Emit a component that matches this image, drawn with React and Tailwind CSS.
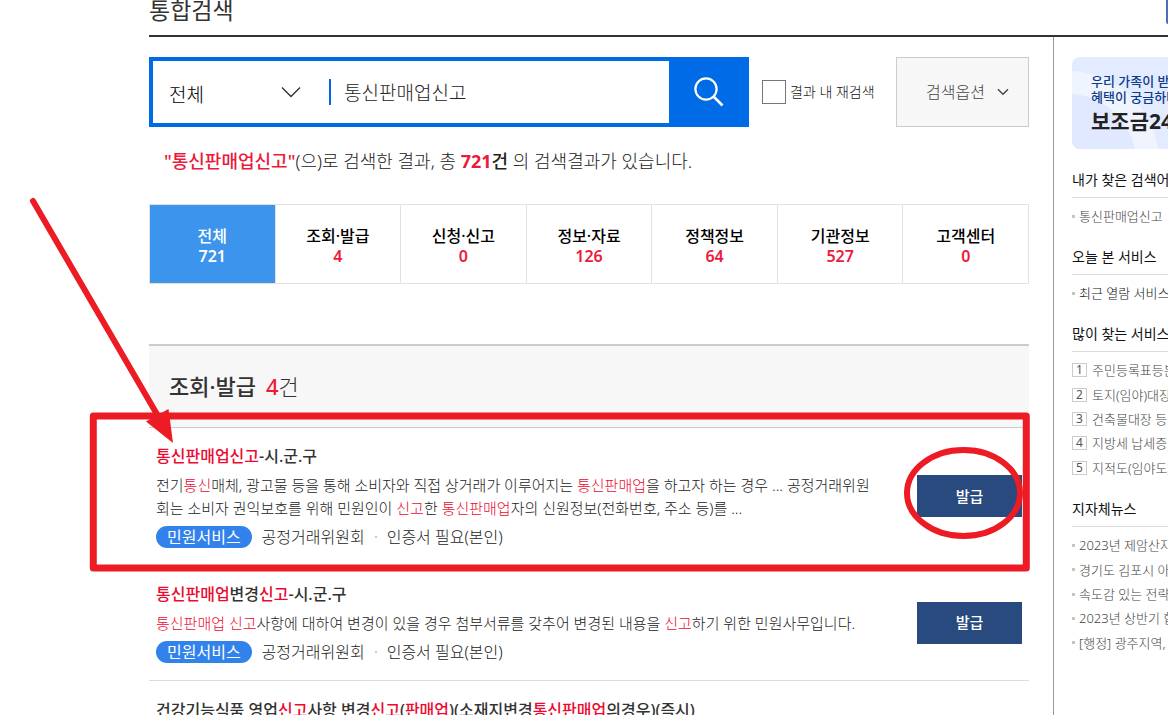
import React, { useState } from 'react';

const tabs = [
  { name: '전체', count: 721 },
  { name: '조회·발급', count: 4 },
  { name: '신청·신고', count: 0 },
  { name: '정보·자료', count: 126 },
  { name: '정책정보', count: 64 },
  { name: '기관정보', count: 527 },
  { name: '고객센터', count: 0 },
];

// [text] marks a keyword hit
const results = [
  {
    id: 1,
    title: '[통신판매업신고]-시.군.구',
    desc: [
      '전기[통신]매체, 광고물 등을 통해 소비자와 직접 상거래가 이루어지는 [통신판매업]을 하고자 하는 경우 ... 공정거래위원',
      '회는 소비자 권익보호를 위해 민원인이 [신고]한 [통신판매업]자의 신원정보(전화번호, 주소 등)를 ...',
    ],
  },
  {
    id: 2,
    title: '[통신판매업]변경[신고]-시.군.구',
    desc: ['[통신판매업 신고]사항에 대하여 변경이 있을 경우 첨부서류를 갖추어 변경된 내용을 [신고]하기 위한 민원사무입니다.'],
  },
];

const popular = ['주민등록표등본', '토지(임야)대장', '건축물대장 등·초본', '지방세 납세증명', '지적도(임야도)'];
const news = ['2023년 제암산자연휴양림', '경기도 김포시 아동', '속도감 있는 전략', '2023년 상반기 합동', '[행정] 광주지역, 전국'];

const Highlight = ({ text }) =>
  text.split(/(\[[^\]]+\])/).map((part, i) =>
    part.startsWith('[') ? (
      <em key={i} className="not-italic text-[#ec0a30]">{part.slice(1, -1)}</em>
    ) : (
      <React.Fragment key={i}>{part}</React.Fragment>
    )
  );

const SideSection = ({ title, children }) => (
  <section className="mb-[19px]">
    <h2 className="text-sm leading-5 pb-[7px] border-b border-[#ddd] text-[#111]">{title}</h2>
    <div className="pt-1.5">{children}</div>
  </section>
);

const Bullet = ({ children, dark }) => (
  <li className="flex-1 flex items-center gap-1">
    <span className="w-[3px] h-[3px] shrink-0 bg-[#c4c4c4]" />
    <a href="#" className={`text-[13px] leading-6 font-light ${dark ? 'text-[#111]' : 'text-[#444]'}`}>{children}</a>
  </li>
);

const SearchBar = () => {
  const [query, setQuery] = useState('통신판매업신고');

  return (
    <form className="flex items-center" onSubmit={(e) => e.preventDefault()}>
      <div className="flex w-[600px] h-[70px] bg-[#006be6] p-1 pr-0">
        <div className="flex flex-1 min-w-0 items-center bg-white">
          <div className="relative w-44 flex items-center">
            <select aria-label="검색 분류" className="w-full appearance-none bg-transparent pl-4 pt-1.5 text-[19px] font-light text-black outline-none">
              <option>전체</option>
            </select>
            <svg className="absolute right-7 pointer-events-none" width="20" height="12" viewBox="0 0 20 12" fill="none" stroke="#333" strokeWidth="1.4">
              <path d="M1 1.5 10 10.5 19 1.5" />
            </svg>
          </div>
          <span className="w-0.5 h-[26px] bg-[#006be6]" />
          <input
            aria-label="검색어"
            value={query}
            onChange={(e) => setQuery(e.target.value)}
            className="flex-1 min-w-0 pl-[13px] pt-0.5 text-[19px] font-light text-[#222] outline-none"
          />
        </div>
        <button type="submit" aria-label="검색" className="w-20 flex items-center justify-center">
          <svg width="30" height="30" viewBox="0 0 30 30" fill="none" stroke="#fff" strokeWidth="2.2">
            <circle cx="12" cy="12" r="10.6" />
            <path d="M19.5 19.5 28.5 28.5" strokeWidth="2.6" />
          </svg>
        </button>
      </div>
      <input id="again" type="checkbox" className="ml-[13px] w-6 h-6 appearance-none border border-[#767676] bg-white checked:bg-[#006be6]" />
      <label htmlFor="again" className="ml-1 text-sm leading-5 font-light text-[#111] whitespace-nowrap">결과 내 재검색</label>
      <button type="button" className="ml-auto w-[133px] h-[70px] pl-2.5 flex items-center justify-center gap-3 border border-[#ccc] bg-[#f7f7f7] font-light text-[#444]">
        검색옵션
        <svg width="12" height="8" viewBox="0 0 12 8" fill="none" stroke="#444" strokeWidth="1.4">
          <path d="M1 1.2 6 6.2 11 1.2" />
        </svg>
      </button>
    </form>
  );
};

const ResultItem = ({ item }) => (
  <li className="flex items-center justify-between border-b border-[#ddd] px-[7px] pt-4 pb-[17px]">
    <div className="whitespace-nowrap">
      <h3 className="text-base leading-6 font-medium">
        <a href="#"><Highlight text={item.title} /></a>
      </h3>
      <p className="mt-1.5 text-[15px] leading-[23px] font-light text-[#222]">
        {item.desc.map((line) => (
          <span key={line} className="block"><Highlight text={line} /></span>
        ))}
      </p>
      <div className="mt-1.5 flex items-center font-light leading-[22px] text-[#222]">
        <span className="rounded-full bg-[#3182eb] px-[11px] font-normal text-white">민원서비스</span>
        <span className="ml-2.5">공정거래위원회</span>
        <span className="mx-2.5 w-0.5 h-0.5 bg-[#ccc]" />
        <span>인증서 필요(본인)</span>
      </div>
    </div>
    <button type="button" className="w-[105px] h-[42px] shrink-0 bg-[#284a7e] text-[15px] font-medium text-white">발급</button>
  </li>
);

const Sidebar = () => (
  <aside className="w-[115px] shrink-0 overflow-hidden whitespace-nowrap border-l border-[#999] pl-[18px] pt-5">
    <a href="#" className="relative block h-[92px] mb-[21px] overflow-hidden rounded-l-lg bg-[#e2ebff] pl-[19px] pt-4">
      <svg className="absolute left-0 top-0" width="96" height="92" viewBox="0 0 96 92">
        <circle cx="-4" cy="105" r="91" fill="#eff4ff" />
        <circle cx="-4" cy="105" r="68" fill="#e0e9ff" />
      </svg>
      <span className="relative block text-[13px] leading-4 font-medium text-[#0b3c8c]">우리 가족이 받을 수 있는</span>
      <span className="relative block text-[13px] leading-4 font-medium text-[#0b3c8c]">혜택이 궁금하다면</span>
      <strong className="relative block mt-0.5 text-[21px] leading-7 font-bold text-[#222]">보조금24</strong>
    </a>
    <SideSection title="내가 찾은 검색어">
      <ul><Bullet>통신판매업신고</Bullet></ul>
    </SideSection>
    <SideSection title="오늘 본 서비스">
      <ul><Bullet dark>최근 열람 서비스가</Bullet></ul>
    </SideSection>
    <SideSection title="많이 찾는 서비스">
      <ol className="flex flex-col h-[122px]">
        {popular.map((name, i) => (
          <li key={name} className="flex-1 flex items-center gap-[5px]">
            <span className="w-[15px] h-[14px] shrink-0 border border-[#ccc] text-center text-xs leading-3 text-[#555]">{i + 1}</span>
            <a href="#" className="text-[13px] leading-6 font-light text-[#444]">{name}</a>
          </li>
        ))}
      </ol>
    </SideSection>
    <SideSection title="지자체뉴스">
      <ul className="flex flex-col h-[122px]">
        {news.map((name) => <Bullet key={name}>{name}</Bullet>)}
      </ul>
    </SideSection>
  </aside>
);

// Hand-drawn guide marks over the page
const Marks = () => (
  <svg className="absolute left-0 top-0 pointer-events-none" width="1168" height="715" viewBox="0 0 1168 715" fill="none" stroke="#ed1c24">
    <ellipse cx="963.5" cy="493" rx="56.5" ry="43" strokeWidth="6" />
    <rect x="93.3" y="416" width="933" height="152" strokeWidth="7" strokeLinejoin="round" />
    <path d="M33 201 158 416" strokeWidth="6" strokeLinecap="round" />
    <path d="M146 421.5 168.5 409 173 443Z" fill="#ed1c24" stroke="none" />
  </svg>
);

const App = () => {
  const [active, setActive] = useState('전체');

  return (
    <div className="relative flex h-screen flex-col overflow-hidden bg-white font-['Noto_Sans','Noto_Sans_CJK_KR',sans-serif] text-[#333]">
      <header className="ml-[149px] flex h-[37px] shrink-0 items-end justify-between border-b-2 border-[#333]">
        <h1 className="pb-[11px] text-[23px] leading-7">통합검색</h1>
        <span className="mb-[11px] h-6 w-0.5 rounded-bl-sm bg-[#4d6db8]" />
      </header>

      <div className="flex flex-1">
        <main className="min-w-0 flex-1 pl-[149px] pr-6 pt-5">
          <SearchBar />

          <p className="mt-5 mb-[29px] pl-[15px] text-lg leading-7 font-light text-[#222]">
            <strong className="font-medium text-[#ec1a3b]">"통신판매업신고"</strong>(으)로 검색한 결과, 총{' '}
            <strong className="font-bold text-[#ec1a3b]">721</strong>
            <strong className="font-medium">건</strong> 의 검색결과가 있습니다.
          </p>

          <nav className="flex h-20 border border-[#e1e1e1]">
            {tabs.map((tab) => (
              <button
                key={tab.name}
                type="button"
                onClick={() => setActive(tab.name)}
                className={`flex-1 border-r border-[#e1e1e1] last:border-r-0 pt-1 text-base leading-5 font-medium ${active === tab.name ? 'bg-[#3c94ec] text-white' : 'bg-white text-black'}`}
              >
                <span className="block">{tab.name}</span>
                <span className={`block font-semibold ${active === tab.name ? 'text-white' : 'text-[#ec1a3b]'}`}>{tab.count}</span>
              </button>
            ))}
          </nav>

          <section className="mt-[60px]">
            <h2 className="flex h-[84px] items-center gap-2.5 border-t-2 border-b border-t-[#ccc] border-b-[#ccc] bg-[#f7f7f7] pl-5 text-[22px] font-medium">
              조회·발급
              <span className="font-light"><em className="not-italic font-medium text-[#ec1a3b]">4</em>건</span>
            </h2>
            <ul>
              {results.map((item) => <ResultItem key={item.id} item={item} />)}
              <li className="pl-[7px] pt-[17px]">
                <h3 className="text-base leading-6 font-medium whitespace-nowrap">
                  <a href="#"><Highlight text="건강기능식품 영업[신고]사항 변경[신고]([판매업])(소재지변경[통신판매업]의경우)(즉시)" /></a>
                </h3>
              </li>
            </ul>
          </section>
        </main>
        <Sidebar />
      </div>
      <Marks />
    </div>
  );
};

export default App;
